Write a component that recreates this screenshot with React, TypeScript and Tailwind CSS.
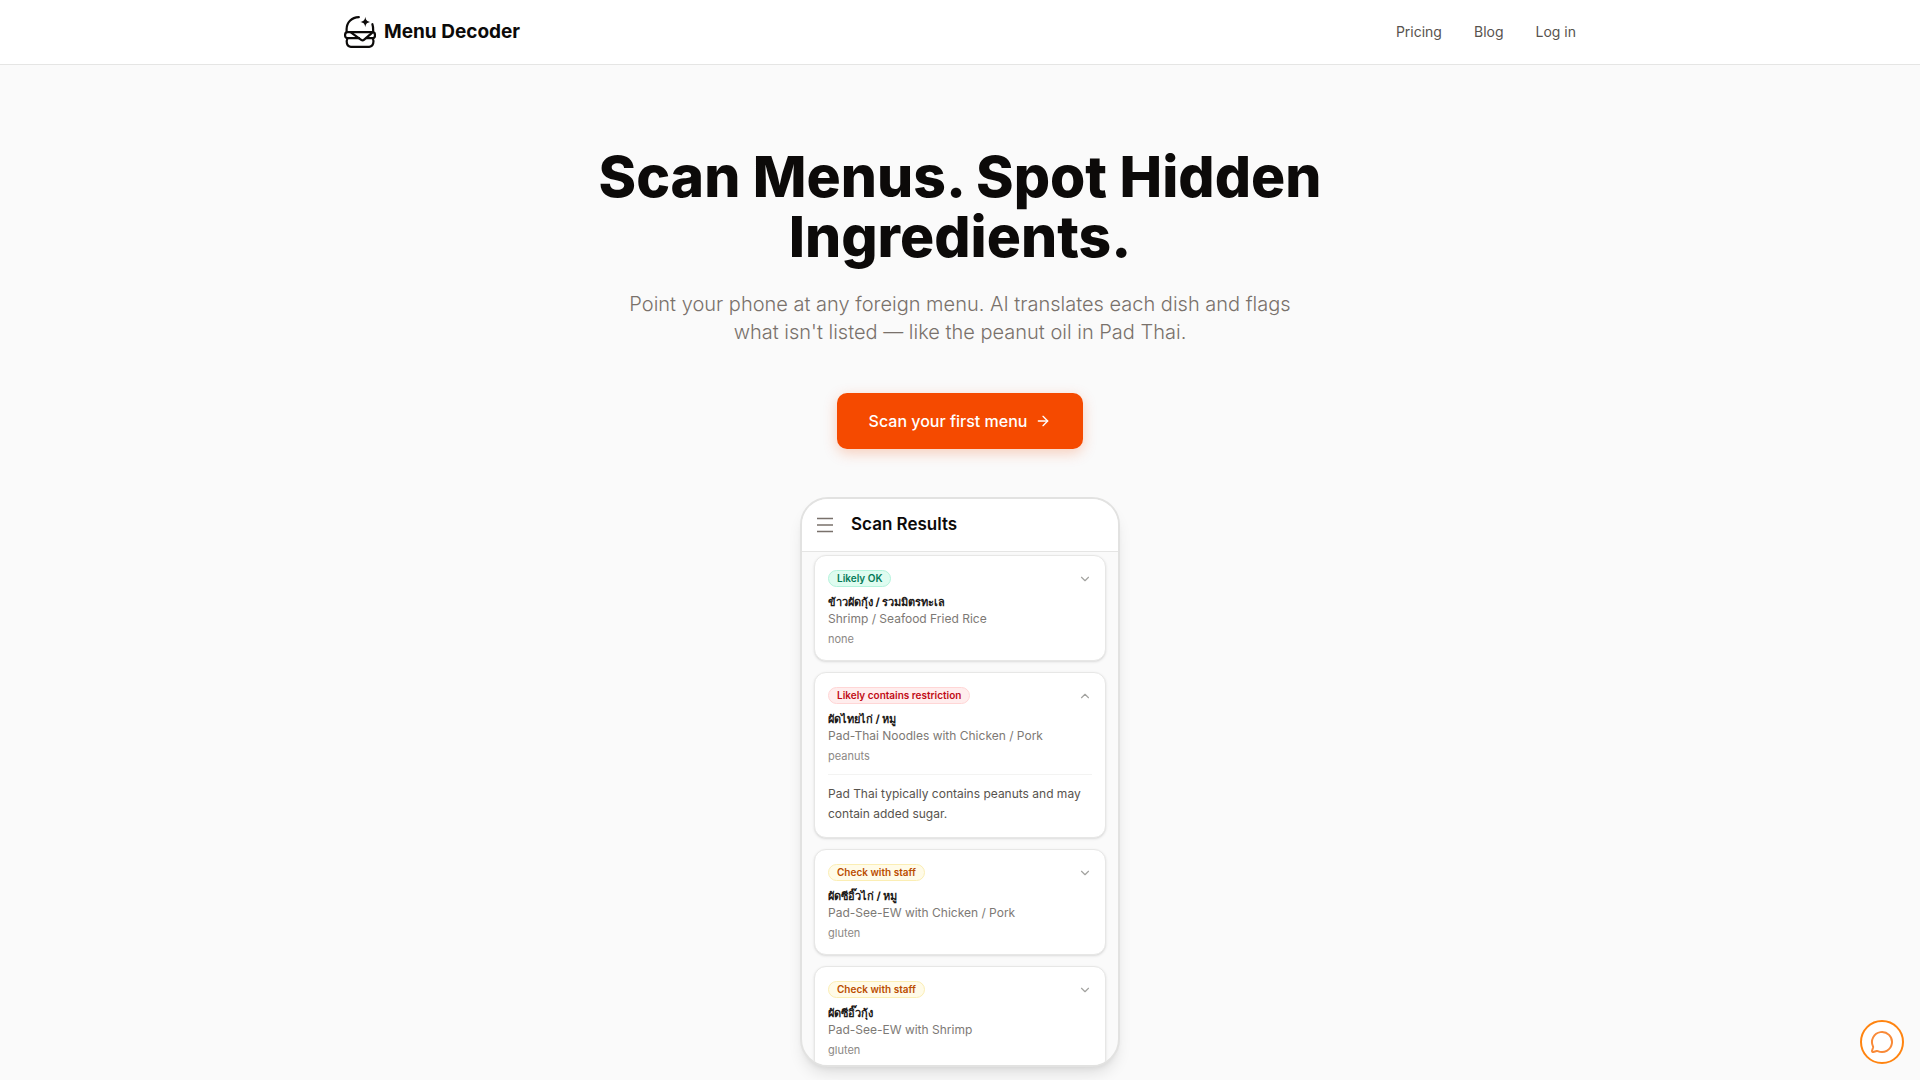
import { ArrowRight, ChevronDown, ChevronUp, MessageCircle } from 'lucide-react';

type Verdict = 'ok' | 'restricted' | 'check';

type Dish = {
  verdict: Verdict;
  name: string;
  translation: string;
  allergens: string;
  note?: string;
};

const verdicts: Record<Verdict, { label: string; style: string }> = {
  ok: { label: 'Likely OK', style: 'border-[#b4f3dc] bg-[#dffcf0] text-[#067a57]' },
  restricted: { label: 'Likely contains restriction', style: 'border-[#ffd6d6] bg-[#ffeded] text-[#c10b15]' },
  check: { label: 'Check with staff', style: 'border-[#fbeeb4] bg-[#fffbe8] text-[#bb4d00]' },
};

const dishes: Dish[] = [
  { verdict: 'ok', name: 'ข้าวผัดกุ้ง / รวมมิตรทะเล', translation: 'Shrimp / Seafood Fried Rice', allergens: 'none' },
  {
    verdict: 'restricted',
    name: 'ผัดไทยไก่ / หมู',
    translation: 'Pad-Thai Noodles with Chicken / Pork',
    allergens: 'peanuts',
    note: 'Pad Thai typically contains peanuts and may contain added sugar.',
  },
  { verdict: 'check', name: 'ผัดซีอิ๊วไก่ / หมู', translation: 'Pad-See-EW with Chicken / Pork', allergens: 'gluten' },
  { verdict: 'check', name: 'ผัดซีอิ๊วกุ้ง', translation: 'Pad-See-EW with Shrimp', allergens: 'gluten' },
];

function BurgerLogo() {
  return (
    <svg viewBox="0 0 32 32" className="size-8" fill="none" stroke="currentColor" strokeWidth="2.2" strokeLinecap="round" strokeLinejoin="round" aria-hidden="true">
      <path d="M2.600 15.800V13C2.600 6.500 7.500 1.300 14.800 1.100" />
      <path d="M28.400 8.200C29 9.600 29.200 11 29.200 15.200" />
      <path d="M3.600 16.200H28.600C31.800 16.200 31.800 22.200 28.600 22.200H22.500M15 22.200H3.600C.2 22.200 .2 16.200 3.600 16.200" />
      <path d="M7.200 16.600L17.200 23.800Q18.700 24.900 20.200 23.600L28 16.800" />
      <path d="M3.400 22.400C2.200 25 2.200 30.800 6.800 30.800H25.200C29.800 30.800 30 25 28.800 22.400" />
      <path d="M21.300 .8C21.900 4.200 22.800 5.300 26.300 6C22.800 6.700 21.900 7.800 21.300 11.200C20.700 7.800 19.800 6.700 16.300 6C19.800 5.300 20.700 4.200 21.300 .8Z" fill="currentColor" stroke="none" />
    </svg>
  );
}

function DishCard({ dish }: { dish: Dish }) {
  const verdict = verdicts[dish.verdict];
  const open = Boolean(dish.note);
  const Chevron = open ? ChevronUp : ChevronDown;
  return (
    <li className="shrink-0 rounded-xl border border-[#e7e7e6] bg-white px-[13px] pt-[14px] pb-[13px] shadow-sm">
      <div className="flex items-center justify-between">
        <span className={`flex h-[17px] items-center rounded-full border px-2 text-[10px] font-semibold ${verdict.style}`}>{verdict.label}</span>
        <button type="button" aria-expanded={open} aria-label={`Details for ${dish.translation}`} className="text-[#a3a3a0]">
          <Chevron className="size-[14px]" />
        </button>
      </div>
      <h3 className="mt-[7px] text-[11px] leading-4 font-bold whitespace-nowrap text-[#1c1917]">{dish.name}</h3>
      <p className="text-xs leading-[17px] whitespace-nowrap text-[#7d7975]">{dish.translation}</p>
      <p className="mt-1 text-[11px] leading-4 text-[#8c8885]">{dish.allergens}</p>
      {dish.note && <p className="mt-[10px] border-t border-[#f3f3f2] pt-[9px] text-xs leading-5 text-[#57534e]">{dish.note}</p>}
    </li>
  );
}

export default function App() {
  return (
    <div className="min-h-screen bg-[#fafafa] font-['Inter','Noto_Sans',sans-serif] text-[#0c0a09]">
      <header className="border-b border-[#e5e5e4] bg-white">
        <div className="mx-auto flex h-16 max-w-7xl items-center justify-between px-6">
          <a href="#home" className="flex items-center gap-2 text-[19px] font-bold">
            <BurgerLogo />
            Menu Decoder
          </a>
          <nav className="flex items-center gap-8 text-sm text-[#57534e]">
            <a href="#pricing">Pricing</a>
            <a href="#blog">Blog</a>
            <a href="#login">Log in</a>
          </nav>
        </div>
      </header>

      <main className="flex flex-col items-center px-6 pt-[82px] pb-3">
        <h1 className="max-w-3xl text-center text-[57px] leading-[60px] font-extrabold">Scan Menus. Spot Hidden Ingredients.</h1>
        <p className="mt-[23px] max-w-[680px] text-center text-xl leading-7 font-light text-[#79716b]">
          Point your phone at any foreign menu. AI translates each dish and flags what isn't listed — like the peanut oil in Pad Thai.
        </p>
        <button type="button" className="mt-[47px] flex h-14 items-center gap-2 rounded-[10px] bg-[#f54a00] px-8 font-medium text-white shadow-[0_4px_14px_rgba(245,74,0,0.25)]">
          Scan your first menu
          <ArrowRight className="size-4" />
        </button>

        <section aria-label="Scan Results" className="mt-12 flex h-[570px] w-80 flex-col overflow-hidden rounded-[28px] border-2 border-[#e2e2e1] bg-[#fafafa] shadow-lg">
          <div className="flex h-[53px] shrink-0 items-center gap-[18px] border-b border-[#e5e5e4] bg-white px-[15px]">
            <button type="button" aria-label="Open menu" className="text-[#79716b]">
              <svg viewBox="0 0 16 16" className="size-4" stroke="currentColor" strokeWidth="1.5" aria-hidden="true">
                <path d="M0 1.500H16M0 8H16M0 14.500H16" />
              </svg>
            </button>
            <h2 className="text-[17px] font-semibold">Scan Results</h2>
          </div>
          <ul className="flex min-h-0 flex-1 flex-col gap-[11px] overflow-hidden px-3 pt-[3px]">
            {dishes.map((dish) => (
              <DishCard key={dish.name} dish={dish} />
            ))}
          </ul>
        </section>
      </main>

      <button type="button" aria-label="Open chat" className="fixed right-4 bottom-4 flex size-11 items-center justify-center rounded-full border-2 border-[#ff8410] bg-white text-[#f98a38]">
        <MessageCircle className="size-6" />
      </button>
    </div>
  );
}
